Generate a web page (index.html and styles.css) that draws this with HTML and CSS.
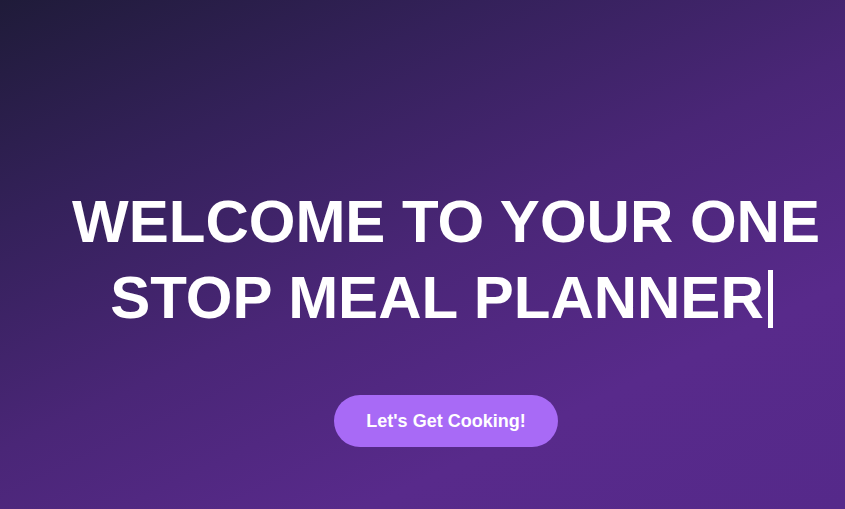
FILE: index.html
```html
<!DOCTYPE html>
<html lang="en">
<head>
<meta charset="utf-8">
<title>Meal Planner</title>
<link rel="stylesheet" href="styles.css">
</head>
<body>
<main class="hero">
  <h1 class="hero-title">WELCOME TO YOUR ONE STOP MEAL PLANNER<span class="caret" aria-hidden="true"></span></h1>
  <button class="cta">Let's Get Cooking!</button>
</main>
</body>
</html>
```
FILE: styles.css
```css
html, body {
  margin: 0;
  padding: 0;
  height: 100%;
}
body {
  font-family: "Liberation Sans", Arial, sans-serif;
  background: linear-gradient(155deg, #1f1b39 0%, #34215a 25%, #4a2677 50%, #582a8b 75%, #55298a 100%);
  overflow: hidden;
}
.hero {
  height: 100%;
  box-sizing: border-box;
  display: flex;
  flex-direction: column;
  align-items: center;
  padding: 184px 0 0 47px;
}
.hero-title {
  margin: 0;
  width: 760px;
  text-align: center;
  color: #ffffff;
  font-size: 60px;
  font-weight: 700;
  line-height: 76px;
}
.caret {
  display: inline-block;
  width: 0;
  height: 58px;
  border-left: 5px solid #ffffff;
  margin-left: 4px;
  margin-right: 9px;
  vertical-align: -10px;
}
.cta {
  margin-top: 59px;
  border: none;
  border-radius: 26px;
  background: #a86af6;
  color: #ffffff;
  font-family: "Liberation Sans", Arial, sans-serif;
  font-size: 18px;
  font-weight: 700;
  line-height: 22px;
  padding: 15px 32px;
  cursor: pointer;
}
```
